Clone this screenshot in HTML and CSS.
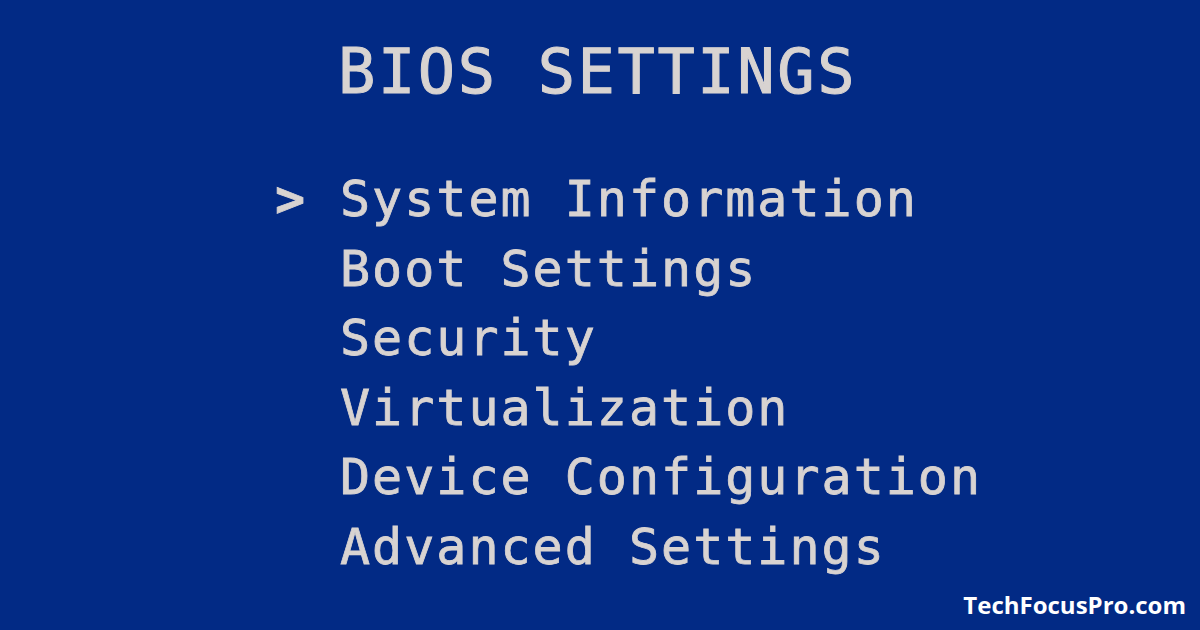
FILE: index.html
```html
<!DOCTYPE html>
<html lang="en">
<head>
    <meta charset="UTF-8">
    <title>BIOS Settings</title>
    <link rel="stylesheet" href="styles.css">
</head>
<body>
    <div class="screen">
        <h1 class="title">BIOS SETTINGS</h1>

        <!-- Menu -->
        <ul class="menu">
            <li class="item active"><span class="cursor">&gt;</span>System Information</li>
            <li class="item"><span class="cursor"></span>Boot Settings</li>
            <li class="item"><span class="cursor"></span>Security</li>
            <li class="item"><span class="cursor"></span>Virtualization</li>
            <li class="item"><span class="cursor"></span>Device Configuration</li>
            <li class="item"><span class="cursor"></span>Advanced Settings</li>
        </ul>
    </div>

    <div class="brand">TechFocusPro.com</div>
</body>
</html>
```

FILE: styles.css
```css
/* Global Styles */
body {
    margin: 0;
    width: 1200px;
    height: 630px;
    overflow: hidden;
    background: #022a85;
    font-family: 'DejaVu Sans Mono', 'Liberation Mono', monospace;
    color: #d8d3d1;
    position: relative;
}

.screen {
    display: flex;
    flex-direction: column;
    padding: 41px 0 0 275px;
}

.title {
    margin: 0 0 0 63px;
    font-size: 62px;
    font-weight: normal;
    line-height: 1;
    letter-spacing: 2.6px;
    -webkit-text-stroke: 1px #d8d3d1;
}

.menu {
    list-style: none;
    margin: 62px 0 0 0;
    padding: 0;
}

.item {
    display: flex;
    font-size: 50px;
    line-height: 69.6px;
    letter-spacing: 2px;
    white-space: pre;
    -webkit-text-stroke: 0.8px #d8d3d1;
}

.cursor {
    width: 65px;
    font-weight: bold;
}

/* Watermark */
.brand {
    position: absolute;
    right: 14px;
    bottom: 9px;
    font-family: 'Open Sans', sans-serif;
    font-weight: bold;
    font-size: 24px;
    color: #ffffff;
}
```
